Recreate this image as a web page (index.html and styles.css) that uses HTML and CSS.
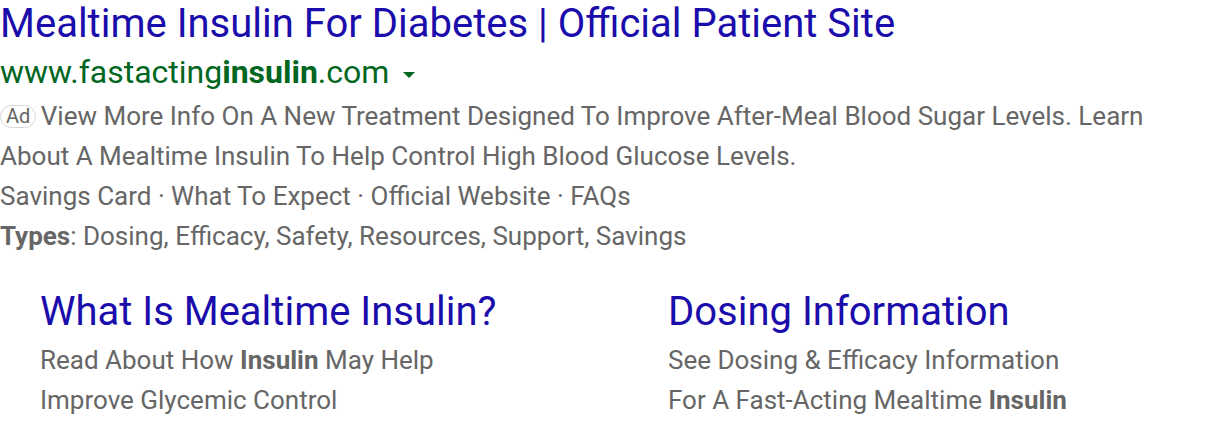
FILE: index.html
```html
<!DOCTYPE html>
<html>
<head>
<meta charset="utf-8">
<link rel="stylesheet" href="styles.css">
</head>
<body>
<div class="ad">
  <div class="title">Mealtime Insulin For Diabetes | Official Patient Site</div>
  <div class="url">www.fastacting<b>insulin</b>.com <span class="caret"></span></div>
  <div class="desc"><span class="badge">Ad</span> View More Info On A New Treatment Designed To Improve After-Meal Blood Sugar Levels. Learn About A Mealtime Insulin To Help Control High Blood Glucose Levels.</div>
  <div class="desc">Savings Card · What To Expect · Official Website · FAQs</div>
  <div class="desc"><b>Types</b>: Dosing, Efficacy, Safety, Resources, Support, Savings</div>
  <div class="sitelinks">
    <div class="sl">
      <div class="sl-title">What Is Mealtime Insulin?</div>
      <div class="desc">Read About How <b>Insulin</b> May Help<br>Improve Glycemic Control</div>
    </div>
    <div class="sl">
      <div class="sl-title">Dosing Information</div>
      <div class="desc">See Dosing &amp; Efficacy Information<br>For A Fast-Acting Mealtime <b>Insulin</b></div>
    </div>
  </div>
</div>
</body>
</html>
```
FILE: styles.css
```css
html, body { margin: 0; padding: 0; background: #fff; }
body { font-family: Roboto, "Liberation Sans", sans-serif; }
.ad { width: 1160px; }
.title { color: #1a0dab; font-size: 40px; line-height: 48px; }
.url { color: #006621; font-size: 32px; line-height: 48px; }
.url b { font-weight: 700; }
.caret { display: inline-block; width: 0; height: 0; border-left: 6px solid transparent; border-right: 6px solid transparent; border-top: 6px solid #006621; vertical-align: middle; margin-left: 6px; }
.desc { color: #666; font-size: 26px; line-height: 40px; }
.desc b { font-weight: 700; }
.badge { display: inline-block; border: 1.5px solid #d8d8d8; border-radius: 12px; font-size: 20px; line-height: 21px; padding: 0 5px; color: #666; vertical-align: 2px; margin-right: -2px; }
.sitelinks { display: grid; grid-template-columns: 628px 1fr; padding-left: 40px; margin-top: 28px; }
.sl-title { color: #1a0dab; font-size: 40px; line-height: 56px; }
```
